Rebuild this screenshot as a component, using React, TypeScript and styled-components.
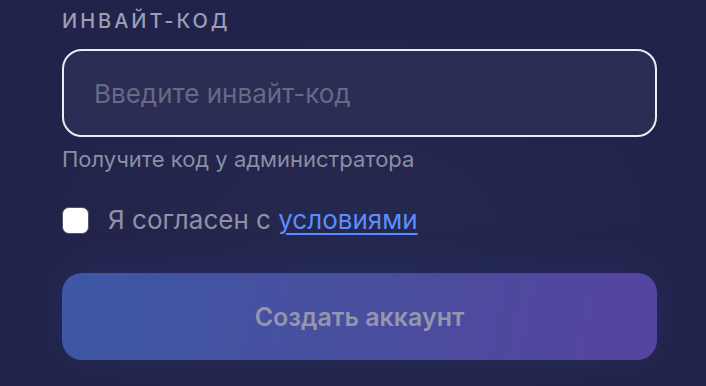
import { createGlobalStyle, styled } from 'styled-components'

const GlobalStyle = createGlobalStyle`
  html, body {
    margin: 0;
    padding: 0;
    background: #23244b;
  }
  body {
    font-family: Inter, "Noto Sans", "Liberation Sans", sans-serif;
    -webkit-font-smoothing: antialiased;
  }
`

const App = () => {
  return (
    <Page>
      <GlobalStyle />
      <Form>
        <Label htmlFor="invite">Инвайт-код</Label>
        <Input id="invite" placeholder="Введите инвайт-код" />
        <Hint>Получите код у администратора</Hint>

        <AgreeRow>
          <Checkbox type="checkbox" />
          <AgreeText>
            Я согласен с <TermsLink href="#">условиями</TermsLink>
          </AgreeText>
        </AgreeRow>

        <SubmitButton type="button" disabled>
          Создать аккаунт
        </SubmitButton>
      </Form>
    </Page>
  )
}

export default App

const Page = styled.div`
  width: 706px;
  height: 386px;
  overflow: hidden;
  background: radial-gradient(ellipse at 50% 60%, #25284f 0%, #22234a 70%);
`

const Form = styled.div`
  display: flex;
  flex-direction: column;
  padding: 9px 49px 0 62px;
`

const Label = styled.label`
  font-size: 20px;
  font-weight: 500;
  letter-spacing: 3px;
  text-transform: uppercase;
  color: #9c9eb4;
  line-height: 24px;
`

const Input = styled.input`
  box-sizing: border-box;
  margin-top: 16px;
  height: 88px;
  width: 100%;
  padding: 0 30px;
  border: 2px solid #ececf4;
  border-radius: 20px;
  background: #2c2d55;
  color: #fff;
  font-family: inherit;
  font-size: 26px;
  outline: none;

  &::placeholder {
    color: #676985;
  }
`

const Hint = styled.div`
  margin-top: 10px;
  font-size: 22px;
  color: #8b8ea4;
  line-height: 24px;
`

const AgreeRow = styled.label`
  display: flex;
  align-items: center;
  gap: 19px;
  margin-top: 35px;
`

const Checkbox = styled.input`
  appearance: none;
  margin: 0;
  width: 27px;
  height: 27px;
  border-radius: 7px;
  background: #fff;
  border: 1px solid #55556a;
  box-sizing: border-box;
`

const AgreeText = styled.span`
  font-size: 26px;
  color: #8f91a6;
  line-height: 28px;
`

const TermsLink = styled.a`
  color: #5b8dff;
  text-decoration: underline;
  text-underline-offset: 4px;
  text-decoration-thickness: 2px;
`

const SubmitButton = styled.button`
  margin-top: 39px;
  height: 87px;
  width: 100%;
  border: none;
  border-radius: 20px;
  background: linear-gradient(100deg, #3d58a4 0%, #4a4d9e 55%, #56449e 100%);
  box-shadow: 0 0 40px rgba(40, 60, 120, 0.35);
  color: #9496ae;
  font-family: inherit;
  font-size: 25px;
  font-weight: 600;
  cursor: not-allowed;
`
